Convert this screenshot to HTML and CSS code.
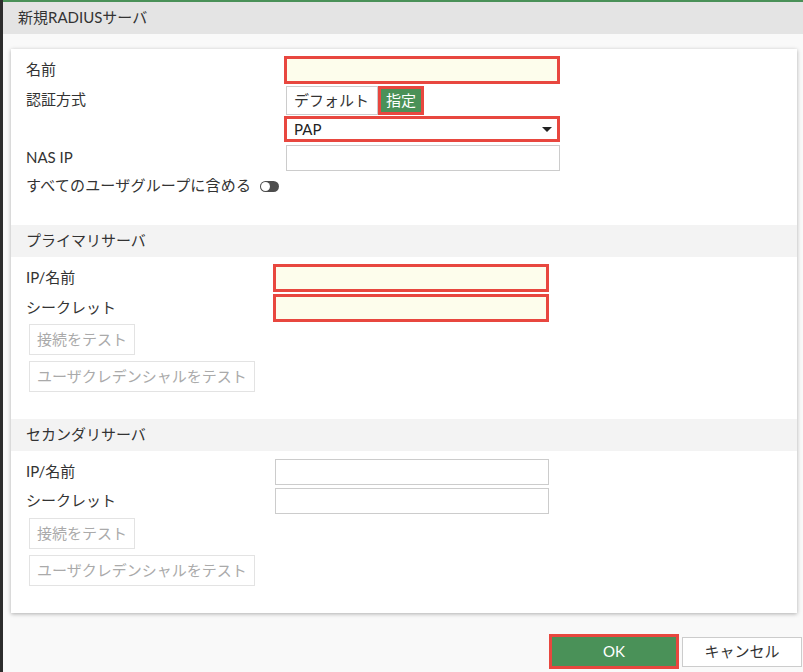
FILE: index.html
```html
<!DOCTYPE html>
<html lang="ja">
<head>
<meta charset="utf-8">
<title>新規RADIUSサーバ</title>
<link rel="stylesheet" href="styles.css">
</head>
<body>
<div class="page">
  <header class="title">新規RADIUSサーバ</header>
  <main class="content">
    <section class="card">
      <div class="general">
        <div class="row r-name">
          <span class="label">名前</span>
          <span class="field req"></span>
        </div>
        <div class="row r-auth">
          <span class="label">認証方式</span>
          <span class="seg">
            <span class="seg-btn">デフォルト</span>
            <span class="seg-btn active"><span class="seg-inner">指定</span></span>
          </span>
        </div>
        <div class="row r-pap">
          <span class="label"></span>
          <span class="select req-plain">PAP<span class="caret"></span></span>
        </div>
        <div class="row r-nas">
          <span class="label">NAS IP</span>
          <span class="field plain nas"></span>
        </div>
        <div class="row r-toggle">
          <span class="toggle-label">すべてのユーザグループに含める</span>
          <span class="toggle"><span class="knob"></span></span>
        </div>
      </div>

      <div class="band">プライマリサーバ</div>
      <div class="server primary">
        <div class="row srow first">
          <span class="label slabel">IP/名前</span>
          <span class="field req sfield"></span>
        </div>
        <div class="row srow second">
          <span class="label slabel">シークレット</span>
          <span class="field req sfield"></span>
        </div>
        <div class="btn-line b1"><span class="dbtn">接続をテスト</span></div>
        <div class="btn-line b2"><span class="dbtn">ユーザクレデンシャルをテスト</span></div>
      </div>

      <div class="band">セカンダリサーバ</div>
      <div class="server secondary">
        <div class="row srow first">
          <span class="label slabel">IP/名前</span>
          <span class="field plain sfield2"></span>
        </div>
        <div class="row srow second">
          <span class="label slabel">シークレット</span>
          <span class="field plain sfield2"></span>
        </div>
        <div class="btn-line b1"><span class="dbtn">接続をテスト</span></div>
        <div class="btn-line b2"><span class="dbtn">ユーザクレデンシャルをテスト</span></div>
      </div>
    </section>
  </main>
  <footer class="actions">
    <span class="ok-wrap"><span class="ok">OK</span></span>
    <span class="cancel">キャンセル</span>
  </footer>
</div>
</body>
</html>
```

FILE: styles.css
```css
* { box-sizing: border-box; }
html, body { margin: 0; padding: 0; }
body {
  font-family: "Lato", "Noto Sans CJK JP", sans-serif;
  font-size: 15px;
  color: #333;
  background: #f9f9f9;
}
.page {
  width: 803px;
  height: 672px;
  border-left: 3px solid #2d2d2d;
  background: #f9f9f9;
  display: flex;
  flex-direction: column;
}
.title {
  height: 34px;
  border-top: 2px solid #4a9158;
  background: #e4e4e4;
  padding-left: 15px;
  padding-bottom: 2px;
  display: flex;
  align-items: center;
  line-height: 1;
  color: #333;
}
.content {
  padding: 15px 5px 0 8px;
}
.card {
  width: 786px;
  height: 564px;
  background: #fff;
  box-shadow: 0 1px 4px rgba(0,0,0,0.3);
  padding-top: 7px;
}
.row {
  display: flex;
  align-items: center;
  padding-left: 15px;
}
.label {
  width: 258px;
  flex: none;
  line-height: 1;
  padding-bottom: 2px;
}
.r-name { height: 28px; }
.r-auth { height: 29px; margin-top: 2px; }
.r-pap { height: 26px; margin-top: 1px; }
.r-nas { height: 26px; margin-top: 3px; }
.r-toggle { height: 20px; margin-top: 5px; }

.field { display: block; }
.req {
  border: 3px solid #e8473f;
  background: #fdfdec;
}
.plain {
  border: 1px solid #ccc;
  background: #fff;
}
.r-name .field { width: 276px; height: 28px; }
.nas { width: 274px; height: 26px; margin-left: 2px; }

.seg { display: flex; margin-left: 2px; height: 29px; }
.seg-btn {
  display: flex;
  align-items: center;
  height: 29px;
  line-height: 1;
}
.seg-btn:first-child {
  width: 92px;
  border: 1px solid #ccc;
  padding-left: 7px;
  padding-bottom: 1px;
  color: #333;
}
.seg-btn.active {
  width: 46px;
  border: 3px solid #e8473f;
  background: #fff;
}
.seg-inner {
  background: #4a9158;
  color: #fff;
  width: 100%;
  height: 100%;
  display: flex;
  align-items: center;
  justify-content: center;
  padding-bottom: 1px;
}
.select {
  width: 276px;
  height: 26px;
  border: 3px solid #e8473f;
  background: #fff;
  display: flex;
  align-items: center;
  padding-left: 7px;
  line-height: 1;
  position: relative;
  color: #222;
}
.caret {
  position: absolute;
  right: 5px;
  top: 8px;
  width: 0;
  height: 0;
  border-left: 5px solid transparent;
  border-right: 5px solid transparent;
  border-top: 5px solid #222;
}
.toggle-label { line-height: 1; margin-right: 9px; padding-bottom: 2px; letter-spacing: 0.2px; }
.toggle {
  width: 19px;
  height: 11px;
  border-radius: 6px;
  background: #4d4d4d;
  position: relative;
  display: block;
}
.knob {
  position: absolute;
  left: 1px;
  top: 1px;
  width: 9px;
  height: 9px;
  border-radius: 50%;
  background: #fff;
}

.band {
  height: 32px;
  background: #f3f3f3;
  padding-left: 15px;
  padding-bottom: 2px;
  display: flex;
  align-items: center;
  line-height: 1;
  color: #333;
}
.general + .band { margin-top: 29px; }
.server.primary { padding-bottom: 27px; }
.slabel { width: 247px; }
.primary .first { height: 28px; margin-top: 7px; }
.primary .second { height: 28px; margin-top: 2px; }
.sfield { width: 276px; height: 28px; }
.secondary .first { height: 26px; margin-top: 8px; }
.secondary .second { height: 26px; margin-top: 3px; }
.sfield2 { width: 274px; height: 26px; margin-left: 2px; }

.btn-line { padding-left: 18px; display: flex; }
.primary .b1 { margin-top: 2px; }
.secondary .b1 { margin-top: 4px; }
.b2 { margin-top: 6px; }
.dbtn {
  height: 31px;
  display: flex;
  align-items: center;
  padding: 0 7px 1px;
  border: 1px solid #e3e3e3;
  color: #aaa;
  line-height: 1;
  background: #fff;
}

.actions {
  display: flex;
  justify-content: flex-end;
  align-items: center;
  gap: 3px;
  padding-right: 1px;
  margin-top: 21px;
}
.ok-wrap {
  width: 130px;
  height: 35px;
  border: 3px solid #e8473f;
  display: flex;
}
.ok {
  flex: 1;
  background: #4a9158;
  color: #fff;
  display: flex;
  align-items: center;
  justify-content: center;
  line-height: 1;
}
.cancel {
  width: 120px;
  height: 30px;
  border: 1px solid #ccc;
  background: #fff;
  display: flex;
  align-items: center;
  justify-content: center;
  line-height: 1;
  color: #333;
}
```
